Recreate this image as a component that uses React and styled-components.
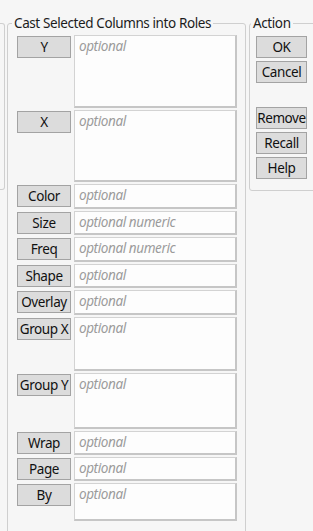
import React from "react";
import styled, { createGlobalStyle } from "styled-components";

const GlobalStyle = createGlobalStyle`
  html, body {
    margin: 0;
    padding: 0;
    background: #f6f6f6;
  }
  body {
    font-family: "Noto Sans", "Open Sans", sans-serif;
    font-size: 13.5px;
    letter-spacing: -0.4px;
    color: #1c1c1c;
    overflow: hidden;
  }
`;

const Page = styled.div`
  display: flex;
  align-items: flex-start;
  height: 531px;
  padding-top: 14px;
  box-sizing: border-box;
  overflow: hidden;
`;

// 왼쪽에 잘려서 보이는 이전 패널
const Stub = styled.div`
  margin-top: 9px;
  width: 4px;
  height: 165px;
  flex-shrink: 0;
  border: 1px solid #cfcfcf;
  border-left: none;
  border-radius: 0 3px 3px 0;
  margin-right: 2px;
`;

const Group = styled.fieldset`
  margin: 0;
  margin-left: ${p => p.$ml || 0}px;
  padding: ${p => p.$pad};
  border: 1px solid #cfcfcf;
  border-radius: 3px;
  box-sizing: border-box;
  width: ${p => p.$w}px;
  height: ${p => p.$h}px;
  flex-shrink: 0;
  min-inline-size: 0;
`;

const Legend = styled.legend`
  padding: 0 2px;
  margin-left: -5px;
  line-height: 18px;
  font-size: 13.5px;
  color: #1c1c1c;
`;

const Row = styled.div`
  display: flex;
  gap: 3px;
  margin-bottom: 2px;
`;

const Button = styled.div`
  width: ${p => p.$w}px;
  height: 22px;
  box-sizing: border-box;
  margin-top: ${p => p.$mt || 0}px;
  background: #dcdcdc;
  border: 1px solid #a3a3a3;
  display: flex;
  align-items: center;
  justify-content: center;
  padding-top: 1px;
  font-size: 13.5px;
  line-height: 1;
  color: #111;
  white-space: nowrap;
  flex-shrink: 0;
`;

const Box = styled.div`
  width: 164px;
  height: ${p => p.$h}px;
  box-sizing: border-box;
  background: #fdfdfd;
  border: 1px solid #d3d3d3;
  border-right: 2px solid #c6c6c6;
  border-bottom: 2px solid #c6c6c6;
  padding: 1px 4px;
`;

const Hint = styled.span`
  font-style: italic;
  color: #9b9b9b;
  font-size: 13.5px;
  line-height: 18px;
`;

const ActionList = styled.div`
  display: flex;
  flex-direction: column;
  gap: 3px;
`;

const roles = [
  { name: "Y", h: 73 },
  { name: "X", h: 72 },
  { name: "Color", h: 25 },
  { name: "Size", h: 24, hint: "optional numeric" },
  { name: "Freq", h: 25, hint: "optional numeric" },
  { name: "Shape", h: 24 },
  { name: "Overlay", h: 25 },
  { name: "Group X", h: 54 },
  { name: "Group Y", h: 56 },
  { name: "Wrap", h: 24 },
  { name: "Page", h: 24 },
  { name: "By", h: 38 },
];

const App = () => {
  return (
    <>
      <GlobalStyle />
      <Page>
        <Stub />
        <Group $w={239} $h={560} $pad="3px 8px 0 9px">
          <Legend>Cast Selected Columns into Roles</Legend>
          {roles.map(r => (
            <Row key={r.name}>
              <Button $w={54} $mt={1}>{r.name}</Button>
              <Box $h={r.h}>
                <Hint>{r.hint || "optional"}</Hint>
              </Box>
            </Row>
          ))}
        </Group>
        <Group $ml={3} $w={72} $h={177} $pad="4px 0 0 6px">
          <Legend>Action</Legend>
          <ActionList>
            <Button $w={51}>OK</Button>
            <Button $w={51}>Cancel</Button>
            <Button $w={51} $mt={21}>Remove</Button>
            <Button $w={51}>Recall</Button>
            <Button $w={51}>Help</Button>
          </ActionList>
        </Group>
      </Page>
    </>
  );
};

export default App;
